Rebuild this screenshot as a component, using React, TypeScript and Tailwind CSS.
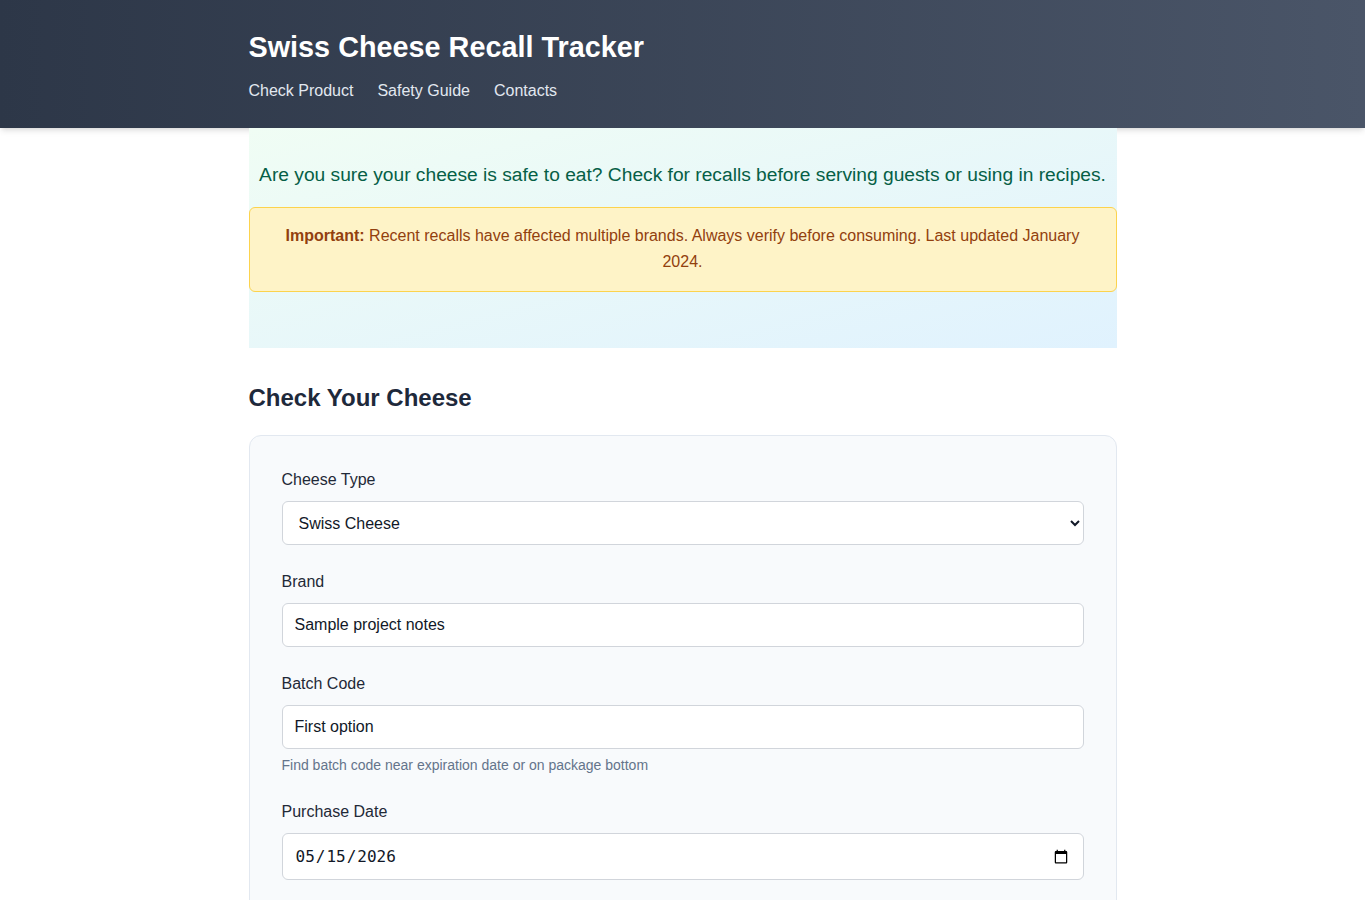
import { useState } from "react";

const navLinks = ["Check Product", "Safety Guide", "Contacts"];

function Field({
  label,
  hint,
  children,
}: {
  label: string;
  hint?: string;
  children: React.ReactNode;
}) {
  return (
    <div className="mb-[25px]">
      <label className="mb-[9px] block text-base leading-6 text-[#1f2937]">{label}</label>
      {children}
      {hint && <p className="mt-[6px] text-sm leading-5 text-[#64748b]">{hint}</p>}
    </div>
  );
}

export default function App() {
  const [cheese, setCheese] = useState("swiss");
  const [brand, setBrand] = useState("Sample project notes");
  const [batch, setBatch] = useState("First option");
  const [date, setDate] = useState("2026-05-15");

  return (
    <div className="min-h-screen bg-white font-['Liberation_Sans',Arial,sans-serif] text-[#1f2937]">
      <header className="bg-gradient-to-r from-[#2d3748] to-[#4a5568] pt-[29px] pb-[25px] shadow-md">
        <div className="mx-auto max-w-[868px]">
          <h1 className="mb-[14px] text-[28.8px] font-bold leading-[36px] text-white">Swiss Cheese Recall Tracker</h1>
          <nav className="flex gap-6 text-base leading-6 text-[#e2e8f0]">
            {navLinks.map((link) => (
              <a key={link} href="#" className="hover:text-white">
                {link}
              </a>
            ))}
          </nav>
        </div>
      </header>

      <main className="mx-auto max-w-[868px]">
        <section className="bg-gradient-to-br from-[#f0fdf4] to-[#e0f2fe] pt-[33px] pb-[56px]">
          <p className="text-center text-[19.2px] leading-7 text-[#065f46]">
            Are you sure your cheese is safe to eat? Check for recalls before serving guests or using in recipes.
          </p>
          <div className="mt-[18px] rounded-md border border-[#fcd34d] bg-[#fef3c7] px-8 pt-[15px] pb-[16px] text-center text-base leading-[26px] text-[#92400e]">
            <strong>Important:</strong> Recent recalls have affected multiple brands. Always verify before consuming. Last
            updated January 2024.
          </div>
        </section>

        <h2 className="mt-[34px] mb-[21px] text-2xl font-bold leading-8 text-[#1e293b]">Check Your Cheese</h2>

        <form className="rounded-xl border border-[#e2e8f0] bg-[#f8fafc] px-8 pt-8 pb-6">
          <Field label="Cheese Type">
            <select
              value={cheese}
              onChange={(e) => setCheese(e.target.value)}
              className="block h-11 w-full rounded-md border border-[#d1d5db] bg-white px-3 text-base text-[#111827]"
            >
              <option value="swiss">Swiss Cheese</option>
              <option value="cheddar">Cheddar</option>
              <option value="gouda">Gouda</option>
            </select>
          </Field>
          <Field label="Brand">
            <input
              value={brand}
              onChange={(e) => setBrand(e.target.value)}
              className="block h-11 w-full rounded-md border border-[#d1d5db] bg-white px-3 text-base text-[#111827]"
            />
          </Field>
          <Field label="Batch Code" hint="Find batch code near expiration date or on package bottom">
            <input
              value={batch}
              onChange={(e) => setBatch(e.target.value)}
              className="block h-11 w-full rounded-md border border-[#d1d5db] bg-white px-3 text-base text-[#111827]"
            />
          </Field>
          <Field label="Purchase Date">
            <input
              type="date"
              value={date}
              onChange={(e) => setDate(e.target.value)}
              className="block h-[47px] w-full rounded-md border border-[#d1d5db] bg-white px-3 font-['DejaVu_Sans_Mono',monospace] text-base text-[#111827]"
            />
          </Field>
        </form>
      </main>
    </div>
  );
}
